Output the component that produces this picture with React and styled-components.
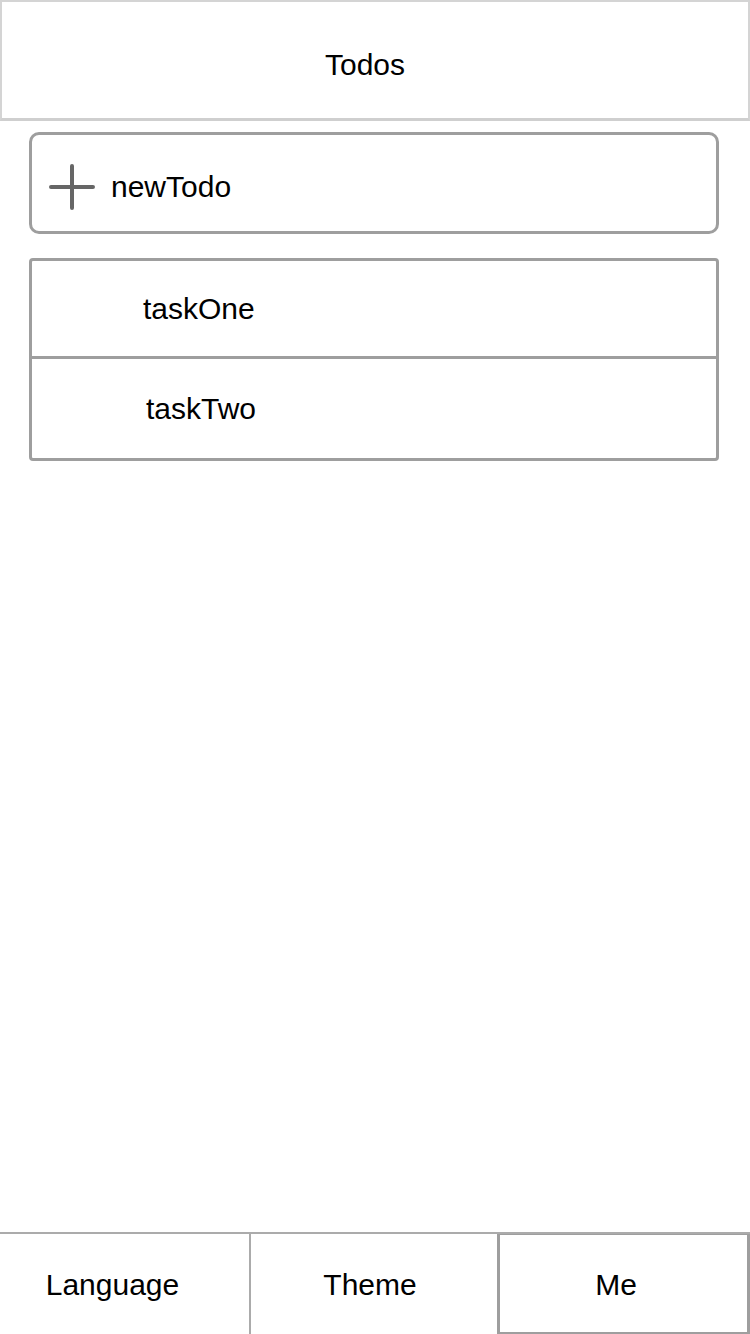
import styled, { createGlobalStyle } from "styled-components";

const GlobalStyle = createGlobalStyle`
  html, body {
    margin: 0;
    padding: 0;
    background: #fff;
  }
  body {
    font-family: "Liberation Sans", Arial, sans-serif;
    color: #000;
  }
`;

const tasks = [
  { id: 1, title: "taskOne" },
  { id: 2, title: "taskTwo" },
];

const tabs = [
  { key: "language", label: "Language", shift: 24 },
  { key: "theme", label: "Theme", shift: 8 },
  { key: "me", label: "Me", shift: 15, active: true },
];

function PlusIcon() {
  return (
    <svg width="46" height="48" viewBox="0 0 46 48">
      <path
        d="M2 24 H44 M23 3 V45"
        stroke="#666"
        strokeWidth="4"
        strokeLinecap="round"
        fill="none"
      />
    </svg>
  );
}

function App() {
  return (
    <Page>
      <GlobalStyle />
      <Header>Todos</Header>
      <Main>
        <NewTodo>
          <PlusIcon />
          <NewTodoLabel>newTodo</NewTodoLabel>
        </NewTodo>
        <TaskList>
          {tasks.map((task) => (
            <TaskRow key={task.id}>{task.title}</TaskRow>
          ))}
        </TaskList>
      </Main>
      <TabBar>
        {tabs.map((tab) => (
          <Tab key={tab.key} $active={tab.active} $shift={tab.shift}>
            {tab.label}
          </Tab>
        ))}
      </TabBar>
    </Page>
  );
}

const Page = styled.div`
  display: flex;
  flex-direction: column;
  min-height: 100vh;
`;

const Header = styled.header`
  box-sizing: border-box;
  height: 121px;
  display: flex;
  align-items: center;
  justify-content: center;
  padding: 10px 20px 0 0;
  border: 2px solid #d4d4d4;
  border-bottom: 3px solid #cfcfcf;
  font-size: 30px;
`;

const Main = styled.main`
  flex: 1;
  display: flex;
  flex-direction: column;
  gap: 24px;
  padding: 11px 31px 0 29px;
`;

const NewTodo = styled.div`
  box-sizing: border-box;
  height: 102px;
  display: flex;
  align-items: center;
  gap: 16px;
  padding: 8px 0 0 17px;
  border: 3px solid #9e9e9e;
  border-radius: 10px;

  svg {
    flex-shrink: 0;
  }
`;

const NewTodoLabel = styled.span`
  font-size: 30px;
`;

const TaskList = styled.div`
  display: flex;
  flex-direction: column;
  border: 3px solid #9e9e9e;
  border-radius: 4px;
`;

const TaskRow = styled.div`
  height: 95px;
  display: flex;
  align-items: center;
  padding-left: 111px;
  font-size: 30px;

  & + & {
    height: 99px;
    border-top: 3px solid #9e9e9e;
    margin-left: -3px;
    padding-left: 117px;
  }
`;

const TabBar = styled.nav`
  display: grid;
  grid-template-columns: 249px 248px 1fr;
  height: 100px;
  border-top: 2px solid #ababab;
`;

const Tab = styled.div`
  display: flex;
  align-items: center;
  justify-content: center;
  padding: 2px ${(p) => p.$shift}px 0 0;
  font-size: 30px;
  border-left: ${(p) => (p.$active ? "3px solid #9e9e9e" : "2px solid #ababab")};
  border-right: ${(p) => (p.$active ? "3px solid #9e9e9e" : "none")};
  border-top: ${(p) => (p.$active ? "1px solid #9e9e9e" : "none")};
  border-bottom: ${(p) => (p.$active ? "2px solid #9e9e9e" : "none")};

  &:first-child {
    border-left: none;
  }
`;

export default App;
